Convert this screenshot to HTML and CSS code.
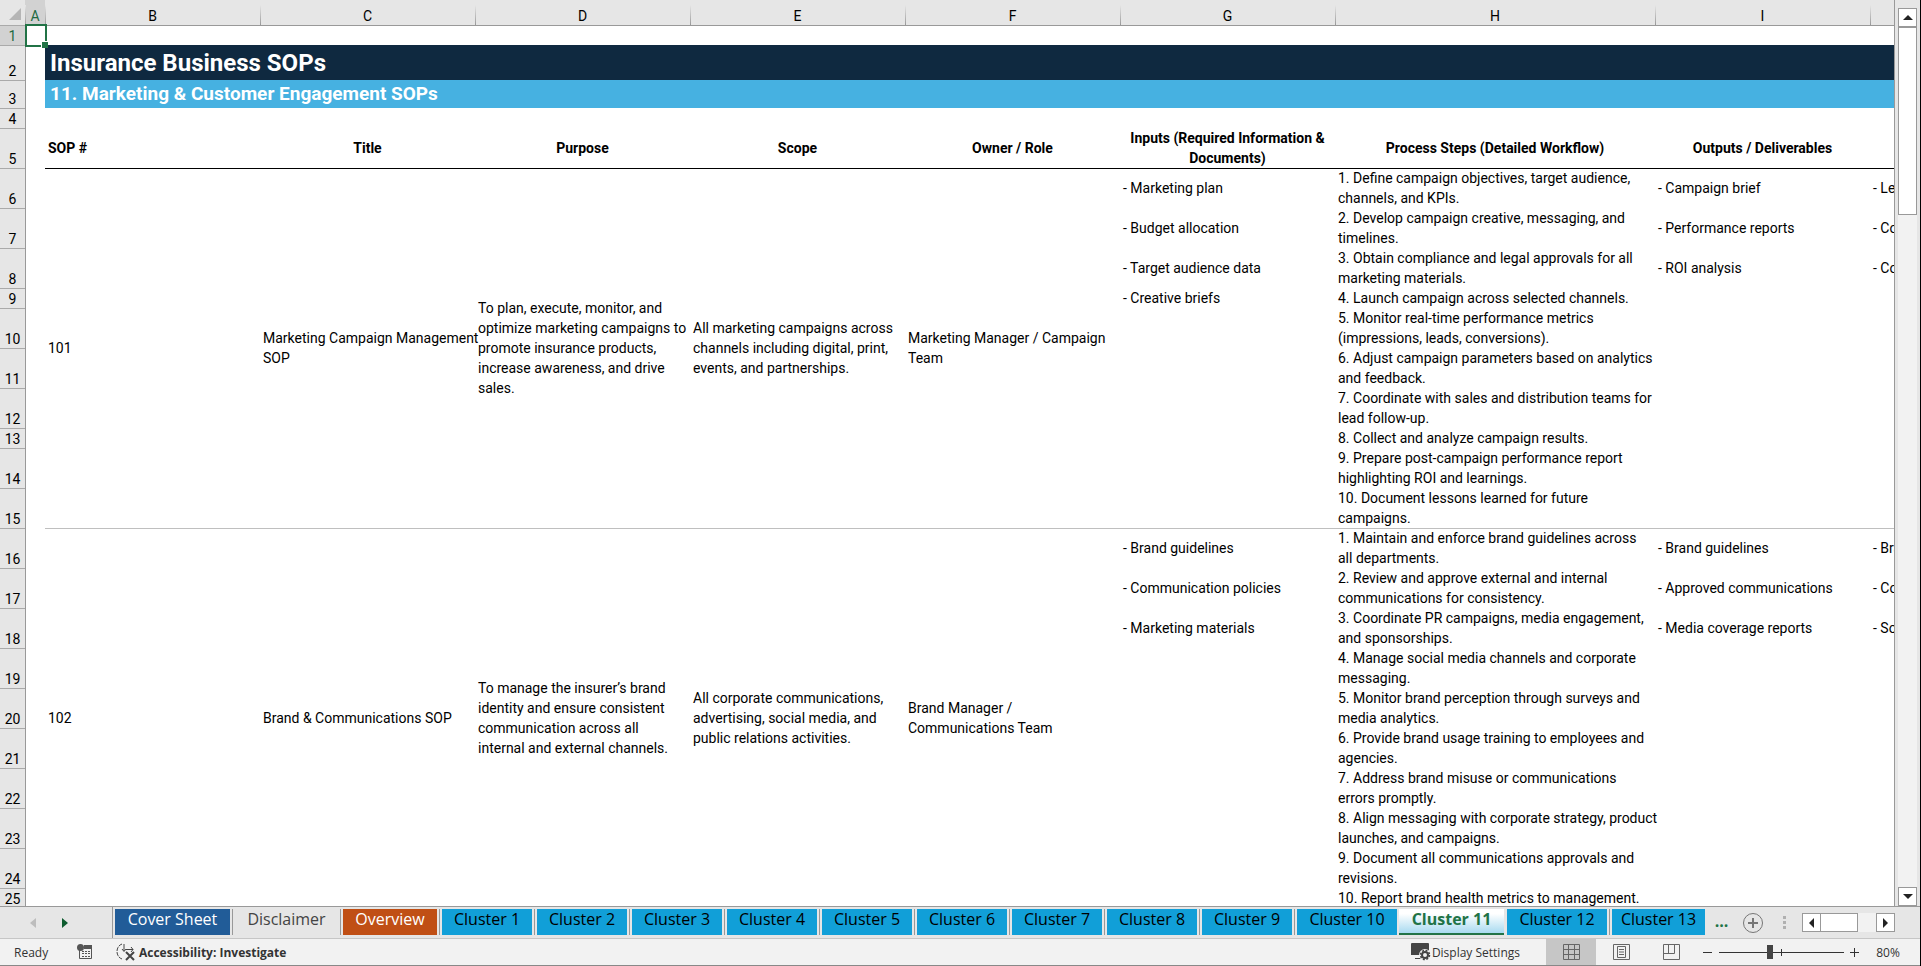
FILE: index.html
```
<!DOCTYPE html>
<html lang="en">
<head>
    <meta charset="UTF-8">
    <meta name="viewport" content="width=device-width, initial-scale=1.0">
    <title>Insurance Business SOPs</title>
    <link rel="stylesheet" href="styles.css">
</head>
<body>

<div class="main">
    <div class="sheet">
        <table class="grid">
            <colgroup>
                <col class="w-num"><col class="w-a"><col class="w-m"><col class="w-m"><col class="w-m"><col class="w-m"><col class="w-m"><col class="w-m"><col class="w-h"><col class="w-m"><col class="w-m">
            </colgroup>
            <thead>
                <tr>
                    <th class="corner"><svg width="12" height="12" viewBox="0 0 12 12"><path d="M12 0v12H0z" fill="#b5b5b5"/></svg></th>
                    <th class="on">A</th><th>B</th><th>C</th><th>D</th><th>E</th><th>F</th><th>G</th><th>H</th><th>I</th><th></th>
                </tr>
            </thead>
            <tbody>
                <tr class="short first"><th class="on">1</th><td class="selected"><span class="cursor"></span></td><td colspan="9"></td></tr>
                <tr class="title"><th>2</th><td></td><td colspan="9">Insurance Business SOPs</td></tr>
                <tr class="subtitle"><th>3</th><td></td><td colspan="9">11. Marketing &amp; Customer Engagement SOPs</td></tr>
                <tr class="short"><th>4</th><td></td><td colspan="9"></td></tr>
                <tr class="head"><th>5</th><td></td><td class="left">SOP #</td><td>Title</td><td>Purpose</td><td>Scope</td><td>Owner / Role</td><td>Inputs (Required Information &amp;<br>Documents)</td><td>Process Steps (Detailed Workflow)</td><td>Outputs / Deliverables</td><td></td></tr>

                <!-- SOP 101 -->
                <tr class="ruled dark">
                    <th>6</th><td></td>
                    <td rowspan="10">101</td>
                    <td rowspan="10">Marketing Campaign Management<br>SOP</td>
                    <td rowspan="10">To plan, execute, monitor, and<br>optimize marketing campaigns to<br>promote insurance products,<br>increase awareness, and drive<br>sales.</td>
                    <td rowspan="10">All marketing campaigns across<br>channels including digital, print,<br>events, and partnerships.</td>
                    <td rowspan="10">Marketing Manager / Campaign<br>Team</td>
                    <td>- Marketing plan</td><td>1. Define campaign objectives, target audience,<br>channels, and KPIs.</td><td>- Campaign brief</td><td>- Lead volume</td>
                </tr>
                <tr><th>7</th><td></td><td>- Budget allocation</td><td>2. Develop campaign creative, messaging, and<br>timelines.</td><td>- Performance reports</td><td>- Conversion</td></tr>
                <tr><th>8</th><td></td><td>- Target audience data</td><td>3. Obtain compliance and legal approvals for all<br>marketing materials.</td><td>- ROI analysis</td><td>- Cost per lead</td></tr>
                <tr class="short"><th>9</th><td></td><td>- Creative briefs</td><td>4. Launch campaign across selected channels.</td><td></td><td></td></tr>
                <tr><th>10</th><td></td><td></td><td>5. Monitor real-time performance metrics<br>(impressions, leads, conversions).</td><td></td><td></td></tr>
                <tr><th>11</th><td></td><td></td><td>6. Adjust campaign parameters based on analytics<br>and feedback.</td><td></td><td></td></tr>
                <tr><th>12</th><td></td><td></td><td>7. Coordinate with sales and distribution teams for<br>lead follow-up.</td><td></td><td></td></tr>
                <tr class="short"><th>13</th><td></td><td></td><td>8. Collect and analyze campaign results.</td><td></td><td></td></tr>
                <tr><th>14</th><td></td><td></td><td>9. Prepare post-campaign performance report<br>highlighting ROI and learnings.</td><td></td><td></td></tr>
                <tr><th>15</th><td></td><td></td><td>10. Document lessons learned for future<br>campaigns.</td><td></td><td></td></tr>

                <!-- SOP 102 -->
                <tr class="ruled">
                    <th>16</th><td></td>
                    <td rowspan="10">102</td>
                    <td rowspan="10">Brand &amp; Communications SOP</td>
                    <td rowspan="10">To manage the insurer’s brand<br>identity and ensure consistent<br>communication across all<br>internal and external channels.</td>
                    <td rowspan="10">All corporate communications,<br>advertising, social media, and<br>public relations activities.</td>
                    <td rowspan="10">Brand Manager /<br>Communications Team</td>
                    <td>- Brand guidelines</td><td>1. Maintain and enforce brand guidelines across<br>all departments.</td><td>- Brand guidelines</td><td>- Brand</td>
                </tr>
                <tr><th>17</th><td></td><td>- Communication policies</td><td>2. Review and approve external and internal<br>communications for consistency.</td><td>- Approved communications</td><td>- Compliance</td></tr>
                <tr><th>18</th><td></td><td>- Marketing materials</td><td>3. Coordinate PR campaigns, media engagement,<br>and sponsorships.</td><td>- Media coverage reports</td><td>- Social</td></tr>
                <tr><th>19</th><td></td><td></td><td>4. Manage social media channels and corporate<br>messaging.</td><td></td><td></td></tr>
                <tr><th>20</th><td></td><td></td><td>5. Monitor brand perception through surveys and<br>media analytics.</td><td></td><td></td></tr>
                <tr><th>21</th><td></td><td></td><td>6. Provide brand usage training to employees and<br>agencies.</td><td></td><td></td></tr>
                <tr><th>22</th><td></td><td></td><td>7. Address brand misuse or communications<br>errors promptly.</td><td></td><td></td></tr>
                <tr><th>23</th><td></td><td></td><td>8. Align messaging with corporate strategy, product<br>launches, and campaigns.</td><td></td><td></td></tr>
                <tr><th>24</th><td></td><td></td><td>9. Document all communications approvals and<br>revisions.</td><td></td><td></td></tr>
                <tr class="short"><th>25</th><td></td><td></td><td>10. Report brand health metrics to management.</td><td></td><td></td></tr>
            </tbody>
        </table>
    </div>
    <div class="vscroll">
        <button class="arrow" aria-label="Scroll up"><svg width="10" height="5" viewBox="0 0 10 5"><path d="M0 5L5 0l5 5z" fill="#222"/></svg></button>
        <div class="vthumb"></div>
        <button class="arrow down" aria-label="Scroll down"><svg width="10" height="5" viewBox="0 0 10 5"><path d="M0 0h10L5 5z" fill="#222"/></svg></button>
    </div>
</div>

<div class="tabbar">
    <div class="tabnav">
        <button aria-label="Previous sheet"><svg width="6" height="10" viewBox="0 0 6 10"><path d="M6 0v10L0 5z" fill="#bdbdbd"/></svg></button>
        <button aria-label="Next sheet"><svg width="6" height="10" viewBox="0 0 6 10"><path d="M0 0v10l6-5z" fill="#0e5c2f"/></svg></button>
    </div>
    <nav class="tabs">
        <button class="tab cover">Cover Sheet</button>
        <button class="tab plain">Disclaimer</button>
        <button class="tab overview">Overview</button>
        <button class="tab">Cluster 1</button>
        <button class="tab">Cluster 2</button>
        <button class="tab">Cluster 3</button>
        <button class="tab">Cluster 4</button>
        <button class="tab">Cluster 5</button>
        <button class="tab">Cluster 6</button>
        <button class="tab">Cluster 7</button>
        <button class="tab">Cluster 8</button>
        <button class="tab">Cluster 9</button>
        <button class="tab wide">Cluster 10</button>
        <button class="tab wide active">Cluster 11</button>
        <button class="tab wide">Cluster 12</button>
        <button class="tab wide last">Cluster 13</button>
    </nav>
    <button class="more" aria-label="More sheets">...</button>
    <button class="add" aria-label="New sheet"><svg width="22" height="22" viewBox="0 0 22 22" fill="none" stroke="#767676"><circle cx="11" cy="11" r="9.5"/><path d="M6 11h10M11 6v10" stroke-width="2"/></svg></button>
    <svg class="grip" width="4" height="14" viewBox="0 0 4 14" fill="#b0b0b0"><path d="M0 0h3v3H0zM0 5h3v3H0zM0 10h3v3H0z"/></svg>
    <div class="hscroll">
        <button class="arrow" aria-label="Scroll left"><svg width="5" height="10" viewBox="0 0 5 10"><path d="M5 0v10L0 5z" fill="#222"/></svg></button>
        <div class="hthumb"></div>
        <button class="arrow right" aria-label="Scroll right"><svg width="5" height="10" viewBox="0 0 5 10"><path d="M0 0v10l5-5z" fill="#222"/></svg></button>
    </div>
</div>

<div class="status">
    <span class="ready">Ready</span>
    <button class="macro" aria-label="Record macro"><svg width="16" height="16" viewBox="0 0 16 16"><path d="M2.500 5v9.500h12v-13H7" fill="none" stroke="#555"/><path d="M7 1h8v4H7z" fill="#555"/><circle cx="3.500" cy="3.500" r="3.500" fill="#555"/><path d="M5 7.500h8M5 9.500h8M5 12.500h8" stroke="#555" stroke-dasharray="2 1"/></svg></button>
    <button class="access"><svg width="20" height="18" viewBox="0 0 20 18" fill="none" stroke="#444"><path d="M6 1C3 2 1 5 1 8.500S3 15 6 16" stroke-dasharray="4 1"/><path d="M8 1v7M6 6l2 2.500L10 6M10 6.500h7M15 4l2 2.500L15 9"/><path d="M10 9l8 8M18 9l-8 8" stroke-width="2"/></svg>Accessibility: Investigate</button>
    <button class="display"><svg width="20" height="18" viewBox="0 0 20 18"><path d="M1 0h16q1 0 1 1v11H0V1q0-1 1-1zM4 15h6v1H4z" fill="#444"/><circle cx="14" cy="12" r="6" fill="#f2f2f2"/><circle cx="14" cy="12" r="4.500" fill="none" stroke="#444" stroke-width="1.500" stroke-dasharray="2 1.530"/><circle cx="14" cy="12" r="3" fill="none" stroke="#444" stroke-width="2"/></svg>Display Settings</button>
    <button class="view on" aria-label="Normal view"><svg width="17" height="16" viewBox="0 0 17 16" fill="none" stroke="#666"><path d="M.5.5h16v15H.5zM.5 5.500h16M.5 10.500h16M5.500.5v15M11.500.5v15"/></svg></button>
    <button class="view" aria-label="Page layout"><svg width="17" height="16" viewBox="0 0 17 16" fill="none" stroke="#666"><path d="M.5.5h16v15H.5zM4.500 2.500h8v11h-8zM6 5.500h5M6 8h5M6 10.500h5"/></svg></button>
    <button class="view" aria-label="Page break preview"><svg width="17" height="16" viewBox="0 0 17 16" fill="none" stroke="#666"><path d="M.5.5h16v15H.5zM5.500.5v9M11.500.5v9M.5 9.500h11"/></svg></button>
    <button class="zoom-btn" aria-label="Zoom out"><svg width="9" height="9" viewBox="0 0 9 9"><path d="M0 4.500h9" stroke="#333"/></svg></button>
    <input class="zoom" type="range" min="0" max="100" value="40" aria-label="Zoom">
    <button class="zoom-btn" aria-label="Zoom in"><svg width="9" height="9" viewBox="0 0 9 9"><path d="M0 4.500h9M4.500 0v9" stroke="#333"/></svg></button>
    <button class="percent">80%</button>
</div>

</body>
</html>
```

FILE: styles.css
```
* {
    box-sizing: border-box;
}
body {
    margin: 0;
    height: 100vh;
    display: flex;
    flex-direction: column;
    overflow: hidden;
    background-color: #e6e6e6;
    border-right: 1px solid #000;
    font-family: Roboto, sans-serif;
    font-size: 14px;
    color: #000;
}
button {
    background: none;
    border: none;
    margin: 0;
    padding: 0;
    font: inherit;
    color: inherit;
}
svg {
    display: block;
}

/* Sheet */
.main {
    flex: 1;
    min-height: 0;
    display: flex;
}
.sheet {
    flex: 1;
    min-width: 0;
    overflow: hidden;
    background: linear-gradient(#e6e6e6 25px, #fff 25px);
    border-right: 1px solid #999;
}
.grid {
    table-layout: fixed;
    width: 2085px;
    border-collapse: separate;
    border-spacing: 0;
    line-height: 20px;
}
.w-num { width: 25px; }
.w-a { width: 20px; }
.w-m { width: 215px; }
.w-h { width: 320px; }
.grid th {
    background-color: #e6e6e6;
    font-weight: normal;
    padding: 0;
}
.grid thead th {
    height: 25px;
    padding-top: 7px;
    line-height: 18px;
    background-image: linear-gradient(#e6e6e6, #999);
    background-size: 1px 20px;
    background-position: left bottom;
    background-repeat: no-repeat;
}
.grid thead .corner {
    padding: 3px 3px 0 9px;
    background-image: none;
}
.grid tbody th {
    height: 40px;
    vertical-align: bottom;
    line-height: 18px;
    box-shadow: inset 0 1px #aaa;
}
.grid th.on {
    background-color: #d2d2d2;
    color: #1f6b42;
}
.grid td {
    padding: 0 0 0 3px;
    vertical-align: middle;
    white-space: nowrap;
}
.grid th + td {
    box-shadow: inset 1px 0 #999;
}
.grid .first td + td {
    box-shadow: inset 0 1px #999;
}
.grid .short th {
    height: 20px;
}
.grid .title th {
    height: 35px;
}
.grid .subtitle th {
    height: 28px;
}
.title td + td {
    background-color: #0f2940;
    color: #fff;
    font-size: 24px;
    font-weight: bold;
}
.subtitle td + td {
    background-color: #46b1e1;
    color: #fff;
    font-size: 19px;
    font-weight: bold;
}
.grid .title td,
.grid .subtitle td {
    padding-left: 5px;
}
.head td + td {
    text-align: center;
    font-weight: bold;
}
.grid .head td {
    padding: 0;
}
.grid .head .left {
    text-align: left;
    padding-left: 3px;
}
.ruled td + td {
    box-shadow: inset 0 1px #bfbfbf;
}
.ruled.dark td + td {
    box-shadow: inset 0 1px #000;
}
.selected {
    position: relative;
}
.cursor {
    position: absolute;
    inset: -1px -2px -2px 0;
    border: 2px solid #217346;
}
.cursor::after {
    content: "";
    position: absolute;
    right: -3px;
    bottom: -3px;
    width: 6px;
    height: 6px;
    background-color: #217346;
    border-left: 1px solid #fff;
    border-top: 1px solid #fff;
}

/* Scrollbars */
.vscroll {
    width: 19px;
    margin: 8px 3px 0 3px;
    display: flex;
    flex-direction: column;
    background-color: #f2f2f2;
}
.arrow {
    display: flex;
    align-items: center;
    justify-content: center;
    width: 19px;
    height: 19px;
    background-color: #fff;
    border: 1px solid #999;
}
.vthumb {
    height: 188px;
    background-color: #fff;
    border: 1px solid #999;
}
.down {
    margin-top: auto;
}
.hscroll {
    width: 93px;
    display: flex;
    margin-left: auto;
    background-color: #f2f2f2;
}
.hthumb {
    width: 37px;
    background-color: #fff;
    border: 1px solid #999;
    border-left: none;
}
.right {
    margin-left: auto;
}

/* Sheet tabs */
.tabbar {
    display: flex;
    align-items: center;
    height: 33px;
    border-top: 1px solid #999;
    border-bottom: 1px solid #c6c6c6;
    padding-right: 25px;
    font-family: "Open Sans", "Noto Sans", sans-serif;
    font-size: 16px;
}
.tabnav {
    display: flex;
    gap: 26px;
    width: 112px;
    padding-left: 30px;
}
.tabs {
    display: flex;
    align-self: stretch;
    padding-top: 2px;
    border-left: 1px solid #999;
    padding-left: 2px;
}
.tab {
    width: 90px;
    height: 26px;
    margin-right: 5px;
    background-color: #119fd8;
    line-height: 20px;
    padding-bottom: 6px;
    white-space: nowrap;
    box-shadow: 2px 0 #e6e6e6, 3px 0 #999;
}
.cover {
    width: 115px;
    background-color: #215c98;
    color: #fff;
}
.plain {
    width: 103px;
    background-color: #e6e6e6;
    color: #444;
}
.overview {
    width: 94px;
    background-color: #c04f15;
    color: #fff;
}
.wide {
    width: 100px;
}
.active {
    width: 105px;
    margin: 0 3px 0 -3px;
    padding-bottom: 4px;
    background: linear-gradient(#fff 20%, #a8daf0);
    color: #217346;
    font-weight: bold;
    border-bottom: 2px solid #217346;
    box-shadow: none;
}
.last {
    width: 93px;
    box-shadow: none;
}
.more {
    color: #217346;
    margin-left: 4px;
    width: 15px;
    font-weight: bold;
    padding-bottom: 4px;
}
.add {
    margin-left: 13px;
}
.grip {
    margin-left: 19px;
}

/* Status bar */
.status {
    display: flex;
    align-items: center;
    height: 27px;
    background-color: #f2f2f2;
    border-bottom: 1px solid #888;
    padding: 0 20px 0 14px;
    font-family: "Open Sans", "Noto Sans", sans-serif;
    font-size: 12px;
    color: #333;
}
.ready {
    width: 36px;
}
.macro {
    margin-left: 27px;
}
.access {
    display: flex;
    align-items: center;
    gap: 3px;
    margin-left: 23px;
    font-weight: bold;
}
.display {
    display: flex;
    align-items: center;
    gap: 1px;
    margin-left: auto;
    margin-right: 26px;
}
.view {
    display: flex;
    align-items: center;
    justify-content: center;
    width: 50px;
    height: 26px;
}
.view.on {
    background-color: #c6c6c6;
}
.zoom-btn {
    width: 9px;
}
.view + .zoom-btn {
    margin-left: 7px;
}
.zoom {
    appearance: none;
    width: 125px;
    height: 14px;
    margin: 0 6px 0 7px;
    background: linear-gradient(#333, #333) center / 1px 7px no-repeat, linear-gradient(#333, #333) center / 100% 1px no-repeat;
}
.zoom::-webkit-slider-thumb {
    appearance: none;
    width: 6px;
    height: 14px;
    background-color: #444;
}
.percent {
    width: 24px;
    margin-left: 17px;
}
```
